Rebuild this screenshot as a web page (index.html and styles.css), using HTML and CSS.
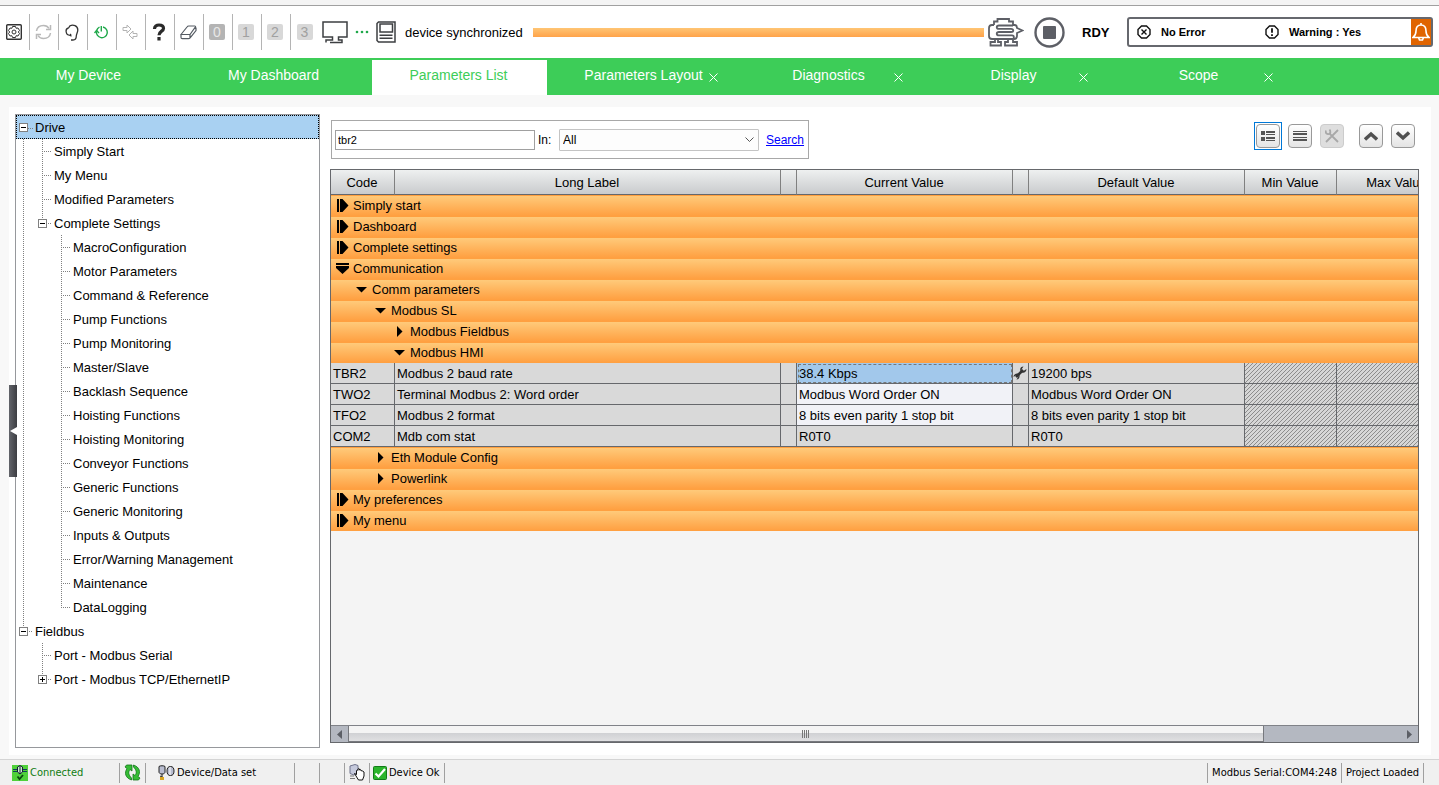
FILE: index.html
```html
<!DOCTYPE html>
<html lang="en">

<head>
  <meta charset="UTF-8">
  <meta name="viewport" content="width=device-width, initial-scale=1.0">
  <title>Parameters List</title>
  <link rel="stylesheet" href="styles.css">
</head>

<body>
  <div class="top-strip"></div>

  <!-- Toolbar -->
  <header class="toolbar">
    <div class="tools">
      <button class="tool" aria-label="Settings">
        <svg width="16" height="16" viewBox="0 0 16 16" fill="none" stroke="#333">
          <rect x="0.7" y="0.7" width="14.6" height="14.6" rx="1" stroke-width="1.4" />
          <path d="M6.5 2.5h3l.6 1.8 1.9-.3 1.5 2.5-1.2 1.5 1.2 1.5-1.5 2.5-1.900-.3-.6 1.800h-3l-.6-1.800-1.900.3L2.500 9.500 3.700 8 2.500 6.500 4 4l1.900.3z" />
          <circle cx="8" cy="8" r="2" />
        </svg>
      </button>
      <button class="tool" aria-label="Refresh">
        <svg width="17" height="16" viewBox="0 0 17 16" fill="none" stroke="#b9b9b9" stroke-width="1.500">
          <path d="M1.500 7C2 3.500 5 1.500 8.500 1.500c2.500 0 4.500 1.200 5.500 3M15.500 9c-.5 3.500-3.500 5.500-7 5.500-2.500 0-4.500-1.200-5.500-3" />
          <path d="M15.500 1v4.500H11M1.500 15v-4.500H6" />
        </svg>
      </button>
      <button class="tool" aria-label="Identify">
        <svg width="14" height="17" viewBox="0 0 14 17" fill="none" stroke="#333" stroke-width="1.300">
          <path d="M3.500 4L5 1.800C8 .2 12.800 1.500 12.800 6c0 2.500-1.500 3.800-1.500 6 0 2.500-1.500 4-3.300 4H6M3.500 4C1.500 4.500.800 6 1.200 8c.3 2 1.800 3.300 3.800 3.300L6 10M5 11.300l1.500 1" />
        </svg>
      </button>
      <button class="tool" aria-label="Connect">
        <svg width="14" height="14" viewBox="0 0 14 14" fill="none" stroke="#1fa84a" stroke-width="1.400">
          <path d="M9 2a5.400 5.400 0 1 1-6.500 4.500M7.300 1v5.500M2.500 6C3 4 4 2.800 5.500 2" />
          <path d="M.5 8l2-2.500L5 8" />
        </svg>
      </button>
      <button class="tool" aria-label="Transfer">
        <svg width="16" height="16" viewBox="0 0 16 16" fill="none" stroke="#b4b4b4">
          <path d="M1 3.500h4V1l4 4-4 4V6.500H1zM15 9.500h-4V7l-4 4 4 4v-2.500h4z" />
        </svg>
      </button>
      <button class="tool" aria-label="Help">
        <svg width="14" height="18" viewBox="0 0 14 18" fill="none" stroke="#2b2b2b" stroke-width="3.200">
          <path d="M2.500 6C2.500 3.200 4.500 2 7 2c2.600 0 4.500 1.200 4.500 3.400C11.500 8.300 7 8 7 12.300" />
          <path d="M7 14v3.500" />
        </svg>
      </button>
      <button class="tool" aria-label="Clear">
        <svg width="17" height="15" viewBox="0 0 17 15" fill="none" stroke="#555b63" stroke-width="1.200">
          <path d="M1 9.500L7 2c.4-.6 1-1 1.700-1h6c.8 0 1 .6.600 1.200L10 9.500zM1 9.500v2.700c0 1 .5 1.500 1.300 1.500H8.500c.7 0 1.200-.3 1.600-.8L16 5.500V2.500M10 9.500v3.500" />
        </svg>
      </button>
      <button class="tool"><span class="digit on">0</span></button>
      <button class="tool"><span class="digit">1</span></button>
      <button class="tool"><span class="digit">2</span></button>
      <button class="tool"><span class="digit">3</span></button>
    </div>

    <div class="link-state">
      <svg width="26" height="23" viewBox="0 0 26 23" fill="none" stroke="#3d3f42" stroke-width="1.500">
        <path d="M4 21.500V19h6.500v-3H1V1h24v15h-8.500v3H20v2.500H8" />
      </svg>
      <svg width="14" height="4" viewBox="0 0 14 4" fill="#1fa84a">
        <circle cx="2" cy="2" r="1.300" />
        <circle cx="7" cy="2" r="1.300" />
        <circle cx="12" cy="2" r="1.300" />
      </svg>
      <svg width="20" height="22" viewBox="0 0 20 22" fill="none" stroke="#3d3f42" stroke-width="1.500">
        <path d="M2.500 1H19v20H2.500L1 19.500v-17z" />
        <rect x="4" y="3" width="12.500" height="8" />
        <path d="M3.500 14.200h13M3.500 17.200h13" />
      </svg>
      <span>device synchronized</span>
    </div>
    <div class="sync-bar"></div>

    <div class="drive-state">
      <svg width="36" height="30" viewBox="0 0 36 30" fill="none" stroke="#5d5f66" stroke-width="1.800">
        <path d="M6 8V4.500H9.500V2H21V4.500H25V8M6 8H4C2 8 1 9 1 11v8c0 2 1 3 3 3h6M25 8h1.500c2 0 2.500 1 2.500 3l5.500 2.500L29 16v3c0 2-1 3-3 3" />
        <path d="M7 22v3H2.500v3.500H13V25h-3v-3M20 22v3h-3v3.500h12V25h-4v-3" />
        <path d="M25 8.500H11c-3 0-3 3.300 0 3.300H23c3 0 3 3.200 0 3.200H11c-3 0-3 3.300 0 3.300H24c2.500 0 2.500 3.700 0 3.700H10" />
      </svg>
      <svg width="31" height="31" viewBox="0 0 31 31">
        <circle cx="15.500" cy="15.500" r="14" fill="none" stroke="#5d5f66" stroke-width="2.400" />
        <rect x="9" y="9" width="13" height="13" rx="1" fill="#5d5f66" />
      </svg>
      <strong class="ready">RDY</strong>
    </div>

    <div class="alerts">
      <div class="alert error">
        <svg width="14" height="14" viewBox="0 0 14 14" fill="none" stroke="#111" stroke-width="1.400">
          <path d="M4.500 1h5L13 4.500v5L9.500 13h-5L1 9.500v-5z" />
          <path d="M4.500 4.500l5 5M9.500 4.500l-5 5" />
        </svg>
        <span>No Error</span>
      </div>
      <div class="alert">
        <svg width="14" height="14" viewBox="0 0 14 14" fill="none" stroke="#111" stroke-width="1.400">
          <path d="M4.500 1h5L13 4.500v5L9.500 13h-5L1 9.500v-5z" />
          <path d="M7 3.200v4.600M7 9.200v1.800" stroke-width="1.800" />
        </svg>
        <span>Warning : Yes</span>
      </div>
      <button class="bell" aria-label="Show warnings">
        <svg width="18" height="20" viewBox="0 0 18 20" fill="none" stroke="#fff" stroke-width="1.600">
          <path d="M9 1v2M1 15.500c2-1.500 3-3.500 3-6.500 0-4 2-6 5-6s5 2 5 6c0 3 1 5 3 6.500zM6.500 15.500l1 2.500h3l1-2.500" />
        </svg>
      </button>
    </div>
  </header>

  <!-- Tabs -->
  <nav class="tabs">
    <div class="tab"><a href="#">My Device</a></div>
    <div class="tab"><a href="#">My Dashboard</a></div>
    <div class="tab active"><a href="#">Parameters List</a></div>
    <div class="tab"><a href="#">Parameters Layout</a><button class="close" aria-label="Close Parameters Layout"><svg width="9" height="9" viewBox="0 0 9 9"><path d="M.5.5l8 8M8.500.5l-8 8" /></svg></button></div>
    <div class="tab"><a href="#">Diagnostics</a><button class="close" aria-label="Close Diagnostics"><svg width="9" height="9" viewBox="0 0 9 9"><path d="M.5.5l8 8M8.500.5l-8 8" /></svg></button></div>
    <div class="tab"><a href="#">Display</a><button class="close" aria-label="Close Display"><svg width="9" height="9" viewBox="0 0 9 9"><path d="M.5.5l8 8M8.500.5l-8 8" /></svg></button></div>
    <div class="tab"><a href="#">Scope</a><button class="close" aria-label="Close Scope"><svg width="9" height="9" viewBox="0 0 9 9"><path d="M.5.5l8 8M8.500.5l-8 8" /></svg></button></div>
  </nav>

  <main class="workspace">
    <div class="panel">
      <button class="handle" aria-label="Collapse tree"></button>

      <!-- Device tree -->
      <aside class="tree">
        <ul>
          <li>
            <div class="node selected"><button class="toggle minus" aria-label="Collapse"></button><a href="#">Drive</a></div>
            <ul>
              <li><div class="node leaf"><a href="#">Simply Start</a></div></li>
              <li><div class="node leaf"><a href="#">My Menu</a></div></li>
              <li><div class="node leaf"><a href="#">Modified Parameters</a></div></li>
              <li>
                <div class="node"><button class="toggle minus" aria-label="Collapse"></button><a href="#">Complete Settings</a></div>
                <ul>
                  <li><div class="node leaf"><a href="#">MacroConfiguration</a></div></li>
                  <li><div class="node leaf"><a href="#">Motor Parameters</a></div></li>
                  <li><div class="node leaf"><a href="#">Command &amp; Reference</a></div></li>
                  <li><div class="node leaf"><a href="#">Pump Functions</a></div></li>
                  <li><div class="node leaf"><a href="#">Pump Monitoring</a></div></li>
                  <li><div class="node leaf"><a href="#">Master/Slave</a></div></li>
                  <li><div class="node leaf"><a href="#">Backlash Sequence</a></div></li>
                  <li><div class="node leaf"><a href="#">Hoisting Functions</a></div></li>
                  <li><div class="node leaf"><a href="#">Hoisting Monitoring</a></div></li>
                  <li><div class="node leaf"><a href="#">Conveyor Functions</a></div></li>
                  <li><div class="node leaf"><a href="#">Generic Functions</a></div></li>
                  <li><div class="node leaf"><a href="#">Generic Monitoring</a></div></li>
                  <li><div class="node leaf"><a href="#">Inputs &amp; Outputs</a></div></li>
                  <li><div class="node leaf"><a href="#">Error/Warning Management</a></div></li>
                  <li><div class="node leaf"><a href="#">Maintenance</a></div></li>
                  <li><div class="node leaf"><a href="#">DataLogging</a></div></li>
                </ul>
              </li>
            </ul>
          </li>
          <li>
            <div class="node"><button class="toggle minus" aria-label="Collapse"></button><a href="#">Fieldbus</a></div>
            <ul>
              <li><div class="node leaf"><a href="#">Port - Modbus Serial</a></div></li>
              <li><div class="node"><button class="toggle plus" aria-label="Expand"></button><a href="#">Port - Modbus TCP/EthernetIP</a></div></li>
            </ul>
          </li>
        </ul>
      </aside>

      <section class="content">
        <div class="controls">
          <form class="search">
            <input type="text" id="query" value="tbr2" aria-label="Search text">
            <label for="scope">In:</label>
            <select id="scope">
              <option>All</option>
            </select>
            <a href="#">Search</a>
          </form>
          <div class="view-buttons">
            <div class="current">
              <button class="view" aria-label="Detailed view">
                <svg width="14" height="10" viewBox="0 0 14 10" fill="#555"><path d="M0 0h4v4H0zM0 6h4v4H0zM5 0h9v2H5zM5 3h9v1H5zM5 6h9v2H5zM5 9h9v1H5z" /></svg>
              </button>
            </div>
            <button class="view" aria-label="Flat view">
              <svg width="14" height="10" viewBox="0 0 14 10" fill="#555"><path d="M0 0h14v1H0zM0 2h14v2H0zM0 6h14v1H0zM0 8h14v2H0z" /></svg>
            </button>
            <button class="view" disabled aria-label="Tools">
              <svg width="14" height="14" viewBox="0 0 14 14" fill="none" stroke="#a8a8a8" stroke-width="1.800"><path d="M13 1L6 8l-5 5M4 4l9 9" /><path d="M1 1.500C0 4 2 5.500 4 5s1.500-3 .5-4.500" /></svg>
            </button>
            <button class="view apart" aria-label="Previous">
              <svg width="14" height="10" viewBox="0 0 14 10" fill="none" stroke="#505050" stroke-width="3.400"><path d="M1 8.500l6-5.500 6 5.500" /></svg>
            </button>
            <button class="view" aria-label="Next">
              <svg width="14" height="10" viewBox="0 0 14 10" fill="none" stroke="#505050" stroke-width="3.400"><path d="M1 1.500L7 7l6-5.500" /></svg>
            </button>
          </div>
        </div>

        <!-- Parameters -->
        <div class="grid">
          <div class="grid-view">
            <table>
              <colgroup>
                <col class="c-code"><col class="c-label"><col class="c-mark"><col class="c-value"><col class="c-mark"><col class="c-value"><col class="c-min"><col class="c-max">
              </colgroup>
              <thead>
                <tr>
                  <th>Code</th><th>Long Label</th><th></th><th>Current Value</th><th></th><th>Default Value</th><th>Min Value</th><th>Max Value</th>
                </tr>
              </thead>
              <tbody>
                <tr class="group"><td colspan="8"><div class="depth0"><svg class="arrow" viewBox="0 0 13 13"><path d="M1 0h2v13H1zM4 0h2.500l6 6.500-6 6.500H4z" /></svg>Simply start</div></td></tr>
                <tr class="group"><td colspan="8"><div class="depth0"><svg class="arrow" viewBox="0 0 13 13"><path d="M1 0h2v13H1zM4 0h2.500l6 6.500-6 6.500H4z" /></svg>Dashboard</div></td></tr>
                <tr class="group"><td colspan="8"><div class="depth0"><svg class="arrow" viewBox="0 0 13 13"><path d="M1 0h2v13H1zM4 0h2.500l6 6.500-6 6.500H4z" /></svg>Complete settings</div></td></tr>
                <tr class="group"><td colspan="8"><div class="depth0"><svg class="arrow" viewBox="0 0 13 13"><path d="M0 1h13v2H0zM0 4h13v2l-6.500 6L0 6z" /></svg>Communication</div></td></tr>
                <tr class="group"><td colspan="8"><div class="depth1"><svg class="arrow" viewBox="0 0 13 13"><path d="M1 4h11L6.500 9.500z" /></svg>Comm parameters</div></td></tr>
                <tr class="group"><td colspan="8"><div class="depth2"><svg class="arrow" viewBox="0 0 13 13"><path d="M1 4h11L6.500 9.500z" /></svg>Modbus SL</div></td></tr>
                <tr class="group"><td colspan="8"><div class="depth3"><svg class="arrow" viewBox="0 0 13 13"><path d="M4 1v11l5.500-5.500z" /></svg>Modbus Fieldbus</div></td></tr>
                <tr class="group"><td colspan="8"><div class="depth3"><svg class="arrow" viewBox="0 0 13 13"><path d="M1 4h11L6.500 9.500z" /></svg>Modbus HMI</div></td></tr>
                <tr>
                  <td>TBR2</td><td>Modbus 2 baud rate</td><td></td><td class="picked">38.4 Kbps</td>
                  <td class="mark"><svg width="14" height="14" viewBox="0 0 14 14"><path d="M3 11L10 4" stroke="#333" stroke-width="2.600" /><path d="M13.500 3l-3 2-2-1.500L10.500.5C8 .5 6.500 2.500 7.500 5L9 6.500c2 .8 4.500-.8 4.500-3.500zM.5 11l3-2 2 1.500-2 3C6 13.500 7 11 6.500 9L5 7.500C3 7 .5 8.500.5 11z" fill="#333" /></svg></td>
                  <td>19200 bps</td><td class="none"></td><td class="none"></td>
                </tr>
                <tr>
                  <td>TWO2</td><td>Terminal Modbus 2: Word order</td><td></td><td class="editable">Modbus Word Order ON</td><td></td><td>Modbus Word Order ON</td><td class="none"></td><td class="none"></td>
                </tr>
                <tr>
                  <td>TFO2</td><td>Modbus 2 format</td><td></td><td class="editable">8 bits even parity 1 stop bit</td><td></td><td>8 bits even parity 1 stop bit</td><td class="none"></td><td class="none"></td>
                </tr>
                <tr>
                  <td>COM2</td><td>Mdb com stat</td><td></td><td>R0T0</td><td></td><td>R0T0</td><td class="none"></td><td class="none"></td>
                </tr>
                <tr class="group"><td colspan="8"><div class="depth2"><svg class="arrow" viewBox="0 0 13 13"><path d="M4 1v11l5.500-5.500z" /></svg>Eth Module Config</div></td></tr>
                <tr class="group"><td colspan="8"><div class="depth2"><svg class="arrow" viewBox="0 0 13 13"><path d="M4 1v11l5.500-5.500z" /></svg>Powerlink</div></td></tr>
                <tr class="group"><td colspan="8"><div class="depth0"><svg class="arrow" viewBox="0 0 13 13"><path d="M1 0h2v13H1zM4 0h2.500l6 6.500-6 6.500H4z" /></svg>My preferences</div></td></tr>
                <tr class="group"><td colspan="8"><div class="depth0"><svg class="arrow" viewBox="0 0 13 13"><path d="M1 0h2v13H1zM4 0h2.500l6 6.500-6 6.500H4z" /></svg>My menu</div></td></tr>
              </tbody>
            </table>
          </div>
          <div class="scrollbar">
            <button aria-label="Scroll left"><svg width="5" height="9" viewBox="0 0 5 9"><path d="M5 0v9L0 4.500z" /></svg></button>
            <div class="track">
              <div class="thumb"></div>
            </div>
            <button aria-label="Scroll right"><svg width="5" height="9" viewBox="0 0 5 9"><path d="M0 0v9l5-4.500z" /></svg></button>
          </div>
        </div>
      </section>
    </div>
  </main>

  <!-- Status bar -->
  <footer class="status">
    <div class="cell connected">
      <svg width="16" height="16" viewBox="0 0 16 16"><rect width="16" height="16" fill="#4fd13a" /><path d="M1 4.500h4M1 6.500h4M11 4.500h4M11 6.500h4" stroke="#163a5c" /><path d="M8 .5L5.500 2v5L8 9l2.500-2V2z" stroke="#123" fill="#cfe8d0" /><path d="M8 1v8" stroke="#123" /><path d="M5.500 11.500l2 2.500 3.500-4" stroke="#0a4a10" stroke-width="1.800" fill="none" /></svg>
      <span>Connected</span>
    </div>
    <div class="cell refresh">
      <svg width="17" height="17" viewBox="0 0 17 17" fill="#35bd35" stroke="#13751a" stroke-width="0.800"><path d="M1 3L2.500 1H8v6L6 5.500C4 8 4.500 11 7.500 14v2C1.500 14 0 9 3 4.500zM16 14l-1.500 2H9v-6l2 1.500C13 9 12.500 6 9.500 3V1C15.500 3 17 8 14 12.500z" /></svg>
    </div>
    <div class="cell dataset">
      <svg width="17" height="16" viewBox="0 0 17 16"><path d="M1 1.500C2 .5 6 .5 7 1.500V7c0 1-1 2-3 2S1 8 1 7z" fill="#b9bdd0" stroke="#222" /><path d="M4 9v4M2 11l4 2" stroke="#222" fill="none" /><rect x="2" y="12" width="4" height="3" fill="#d9a520" /><ellipse cx="12.500" cy="6" rx="3.500" ry="4.500" fill="#b9bdd0" stroke="#222" /><path d="M12 2v8" stroke="#fff" /></svg>
      <span>Device/Data set</span>
    </div>
    <div class="cell blank"></div>
    <div class="cell blank"></div>
    <div class="cell blank hand">
      <svg width="17" height="17" viewBox="0 0 17 17"><path d="M1 2l5-1.500 3 1V9l-4 2-4-1.500z" fill="#c5c9dc" stroke="#70748c" /><path d="M1 12h4M1 14.500h5" stroke="#777" /><path d="M5.500 9.500l2 1V6.500q1-1 1.500 0V5q1-1 1.500 0v1q1-1 1.500 0v1q1-.8 1.500 0l1.500 1v4l-1.500 4h-4z" fill="#fff" stroke="#111" /></svg>
    </div>
    <div class="cell device">
      <svg width="14" height="14" viewBox="0 0 14 14"><rect x="0.500" y="0.500" width="13" height="13" rx="1" fill="#2bb52b" stroke="#137a18" /><path d="M2.500 7.500l3 3L12 3" stroke="#fff" stroke-width="2.200" fill="none" /></svg>
      <span>Device Ok</span>
    </div>
    <div class="cell filler"></div>
    <div class="cell">Modbus Serial:COM4:248</div>
    <div class="cell">Project Loaded</div>
  </footer>
</body>

</html>
```
FILE: styles.css
```css
* {
  box-sizing: border-box;
}

body {
  margin: 0;
  height: 100vh;
  display: flex;
  flex-direction: column;
  font-family: "Liberation Sans", Arial, sans-serif;
  font-size: 13px;
  color: #000;
  background-color: #fff;
}

button {
  padding: 0;
  border: none;
  background: none;
  font: inherit;
  cursor: pointer;
}

svg {
  display: block;
  flex: none;
}

a {
  color: inherit;
  text-decoration: none;
}

.top-strip {
  height: 6px;
  flex: none;
  background-color: #f4f4f4;
  border-bottom: 1px solid #a0a0a0;
}

/* Toolbar */
.toolbar {
  height: 52px;
  flex: none;
  display: flex;
  align-items: center;
  padding-right: 6px;
}

.tools {
  display: flex;
  padding-left: 1px;
}

.tool {
  width: 29px;
  height: 36px;
  display: flex;
  align-items: center;
  justify-content: center;
  padding-right: 2px;
  border-right: 1px solid #b4b4b4;
}

.tool:last-child {
  border-right: none;
}

.digit {
  width: 16px;
  height: 16px;
  border-radius: 2px;
  font-size: 14px;
  line-height: 16px;
  color: #a0a0a0;
  background-color: #d8d8d8;
}

.digit.on {
  color: #e8e8e8;
  background-color: #b4b4b4;
}

.link-state {
  display: flex;
  align-items: center;
  gap: 7px;
  padding: 0 10px 0 2px;
}

.link-state span {
  padding-left: 2px;
}

.sync-bar {
  flex: 1;
  height: 9px;
  background: linear-gradient(#ffc574, #ffa34a);
}

.drive-state {
  display: flex;
  align-items: center;
  gap: 10px;
  margin-left: 4px;
}

.ready {
  width: 52px;
  padding-left: 7px;
  font-weight: bold;
}

.alerts {
  width: 306px;
  height: 30px;
  display: flex;
  align-items: center;
  border: 2px solid #66686e;
  border-radius: 3px;
  font-size: 11px;
  font-weight: bold;
}

.alert {
  display: flex;
  align-items: center;
  gap: 10px;
}

.alert.error {
  width: 136px;
  padding-left: 8px;
}

.bell {
  width: 20px;
  height: 26px;
  margin-left: auto;
  display: flex;
  align-items: center;
  justify-content: center;
  background-color: #e06400;
}

/* Tabs */
.tabs {
  height: 37px;
  flex: none;
  display: flex;
  gap: 10px;
  padding: 2px 0 0 2px;
  background-color: #3dcd58;
}

.tab {
  width: 175px;
  display: grid;
  color: #fff;
  font-size: 14px;
}

.tab a {
  grid-area: 1 / 1;
  padding-right: 2px;
  line-height: 30px;
  text-align: center;
}

.tab.active {
  color: #3dcd58;
  background-color: #fff;
}

.close {
  grid-area: 1 / 1;
  justify-self: end;
  align-self: center;
  margin-right: 14px;
}

.close path {
  stroke: #fff;
}

/* Workspace */
.workspace {
  flex: 1;
  min-height: 0;
  display: flex;
  padding: 12px 8px 4px 9px;
  background-color: #f8f8f8;
}

.panel {
  flex: 1;
  min-width: 0;
  position: relative;
  display: flex;
  gap: 10px;
  padding: 7px 12px 7px 6px;
  background-color: #fff;
}

.handle {
  position: absolute;
  left: 0;
  top: 278px;
  width: 8px;
  height: 92px;
  background: linear-gradient(90deg, #62646a, #3c3d42);
}

.handle::after {
  content: "";
  display: block;
  border: 4px solid transparent;
  border-right: 7px solid #fff;
  border-left: none;
}

/* Tree */
.tree {
  width: 305px;
  flex: none;
  border: 1px solid #96989c;
}

.tree ul {
  margin: 0;
  padding: 0;
  list-style: none;
}

.tree ul ul {
  padding-left: 19px;
}

.tree li {
  background: repeating-linear-gradient(#808080 0 1px, transparent 1px 2px) 7px 0 / 1px 100% no-repeat;
}

.tree li:last-child {
  background-size: 1px 12px;
}

.node {
  height: 24px;
  display: flex;
  align-items: center;
  padding-left: 3px;
  background: repeating-linear-gradient(90deg, #808080 0 1px, transparent 1px 2px) 7px 12px / 9px 1px no-repeat;
}

.node.leaf {
  padding-left: 19px;
}

.node.selected {
  padding-left: 2px;
  background-color: #a9d1f2;
  border: 1px dotted #000;
}

.toggle {
  width: 9px;
  height: 9px;
  margin-right: 7px;
  border: 1px solid #808080;
  background: linear-gradient(#000, #000) center / 5px 1px no-repeat #fff;
}

.toggle.plus {
  background: linear-gradient(#000, #000) center / 5px 1px no-repeat, linear-gradient(#000, #000) center / 1px 5px no-repeat #fff;
}

/* Search and view buttons */
.content {
  flex: 1;
  min-width: 0;
  display: flex;
  flex-direction: column;
}

.controls {
  height: 55px;
  flex: none;
  display: flex;
  align-items: flex-start;
  justify-content: space-between;
  padding: 6px 4px 0 1px;
}

.search {
  width: 478px;
  height: 39px;
  display: flex;
  align-items: center;
  padding: 0 3px;
  border: 1px solid #a8a8a8;
}

.search input {
  width: 200px;
  height: 20px;
  padding: 0 2px;
  border: 1px solid #a0a0a0;
  font: 11px "Liberation Sans", Arial, sans-serif;
}

.search label {
  width: 24px;
  padding-left: 3px;
  font-size: 12px;
}

.search select {
  width: 200px;
  height: 22px;
  padding: 0 3px;
  appearance: none;
  border: 1px solid #c4c4c4;
  border-radius: 1px;
  font: 12px "Liberation Sans", Arial, sans-serif;
  background: url("data:image/svg+xml,%3Csvg xmlns='http://www.w3.org/2000/svg' width='9' height='6' fill='none' stroke='%23555'%3E%3Cpath d='M.5.5l4 4 4-4'/%3E%3C/svg%3E") right 4px center no-repeat #fdfdfd;
}

.search a {
  margin-left: 7px;
  font-size: 12px;
  color: #00f;
  text-decoration: underline;
}

.view-buttons {
  display: flex;
  align-items: center;
  gap: 8px;
  padding-top: 2px;
}

.current {
  margin-right: -2px;
  padding: 1px;
  border: 1px solid #0078d7;
}

.view {
  width: 24px;
  height: 24px;
  display: flex;
  align-items: center;
  justify-content: center;
  border: 1px solid #999;
  border-radius: 4px;
  background: linear-gradient(#fff, #e4e4e4);
}

.view:disabled {
  border-color: #ccc;
  background: #dedede;
}

.view.apart {
  margin-left: 7px;
}

/* Parameter grid */
.grid {
  flex: 1;
  min-height: 0;
  display: flex;
  flex-direction: column;
  margin-bottom: 5px;
  border: 1px solid #66686c;
  background-color: #f4f4f4;
}

.grid-view {
  flex: 1;
  min-height: 0;
  overflow: hidden;
}

table {
  width: 1127px;
  table-layout: fixed;
  border-spacing: 0;
}

.c-code {
  width: 64px;
}

.c-label {
  width: 386px;
}

.c-mark {
  width: 16px;
}

.c-value {
  width: 216px;
}

.c-min {
  width: 92px;
}

.c-max {
  width: 121px;
}

th {
  height: 25px;
  padding: 0 1px 0 0;
  font-weight: normal;
  border-right: 1px solid #808080;
  border-bottom: 1px solid #66686c;
  background: linear-gradient(#eef0f0, #c9cbcd);
}

td {
  height: 21px;
  padding: 1px 2px 0;
  line-height: 19px;
  white-space: nowrap;
  border-right: 1px solid #66686c;
  border-bottom: 1px solid #66686c;
  background-color: #d9d9d9;
}

.group td {
  padding: 0;
  border: none;
  background: linear-gradient(#ffa040 0 1px, #ffca7a 1px, #ff9f40);
}

.group div {
  display: flex;
  align-items: center;
  gap: 4px;
}

.arrow {
  width: 13px;
  height: 13px;
}

.depth0 {
  padding-left: 5px;
}

.depth1 {
  padding-left: 24px;
}

.depth2 {
  padding-left: 43px;
}

.depth3 {
  padding-left: 62px;
}

.editable {
  background-color: #f1f2f7;
}

.picked {
  background-color: #a2c8eb;
  outline: 1px dashed #777;
  outline-offset: -2px;
}

.mark {
  padding: 0;
}

.none {
  background: linear-gradient(135deg, #d6d6d6 44%, #8c8c8c 44% 56%, #d6d6d6 56%) 0 0 / 4px 4px padding-box;
}

.scrollbar {
  height: 17px;
  flex: none;
  display: flex;
  background-color: #b4b8c1;
  border-top: 1px solid #808288;
}

.scrollbar button {
  width: 17px;
  display: flex;
  align-items: center;
  justify-content: center;
}

.scrollbar path {
  fill: #5c5f66;
}

.track {
  flex: 1;
  display: flex;
}

.thumb {
  width: 87%;
  border: 1px solid #77797e;
  border-top: none;
  background:
    repeating-linear-gradient(90deg, #777 0 1px, transparent 1px 2px) center / 8px 8px no-repeat,
    linear-gradient(#f4f4f4 45%, #cfd0d3 45%, #e0e0e2);
}

/* Status bar */
.status {
  height: 26px;
  flex: none;
  display: flex;
  align-items: center;
  padding-right: 15px;
  border-top: 1px solid #d4d4d4;
  background-color: #f0f0f0;
  font-family: "DejaVu Sans Condensed", "DejaVu Sans", sans-serif;
  font-size: 11px;
}

.cell {
  height: 20px;
  display: flex;
  align-items: center;
  gap: 2px;
  padding: 0 4px;
  border-right: 1px solid #a0a0a0;
}

.connected {
  width: 120px;
  padding-left: 12px;
  color: #107c10;
}

.refresh {
  width: 26px;
}

.dataset {
  width: 149px;
  padding-left: 12px;
}

.blank {
  width: 25px;
}

.device {
  width: 75px;
  padding: 0 3px;
}

.filler {
  flex: 1;
}
```
